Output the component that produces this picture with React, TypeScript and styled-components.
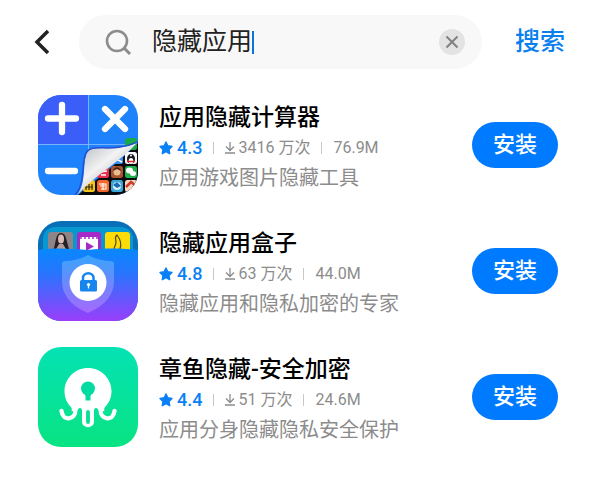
import React, { FC, useState } from 'react'
import styled, { createGlobalStyle } from 'styled-components'

const GlobalStyle = createGlobalStyle`
  * {
    box-sizing: border-box;
  }

  body {
    margin: 0;
    background: #ffffff;
    font-family: Roboto, 'Noto Sans CJK SC', sans-serif;
    color: #000000;
  }

  button,
  input {
    font-family: inherit;
    border: none;
    padding: 0;
    background: none;
  }

  button {
    cursor: pointer;
  }
`

const Page = styled.main`
  padding: 15px 0 40px;
`

const SearchBar = styled.form`
  display: flex;
  align-items: center;
  padding: 0 35px 0 34px;
`

const BackButton = styled.button`
  display: flex;
  margin-right: 29px;
`

const Field = styled.div`
  display: flex;
  align-items: center;
  flex: 1;
  min-width: 0;
  height: 54px;
  padding: 0 17px 0 26px;
  border-radius: 27px;
  background: #f8f8f8;
`

const SearchInput = styled.input`
  field-sizing: content;
  min-width: 0;
  margin-left: 20px;
  font-size: 25px;
  line-height: 36px;
  color: #222222;
  caret-color: transparent;
  outline: none;
`

const Caret = styled.span`
  width: 2px;
  height: 23px;
  background: #0a74d8;
`

const ClearButton = styled.button`
  display: flex;
  margin-left: auto;
`

const SubmitButton = styled.button`
  margin-left: 33px;
  font-size: 25px;
  font-weight: 500;
  line-height: 36px;
  color: #0a80ee;
`

const AppList = styled.ul`
  display: flex;
  flex-direction: column;
  gap: 26px;
  margin: 26px 0 0;
  padding: 0 42px 0 38px;
  list-style: none;
`

const AppRow = styled.li`
  display: flex;
  align-items: center;
`

const AppIcon = styled.svg`
  flex: none;
  width: 100px;
  height: 100px;
`

const Info = styled.div`
  flex: 1;
  min-width: 0;
  margin-left: 21px;
  padding-top: 5px;
`

const Title = styled.h2`
  margin: 0;
  font-size: 23px;
  font-weight: 500;
  line-height: 30px;
`

const Meta = styled.div`
  display: flex;
  align-items: center;
  gap: 11px;
  font-size: 16px;
  line-height: 30px;
  color: #8c8c8c;
`

const Rating = styled.span`
  display: flex;
  align-items: center;
  gap: 4px;
  font-size: 18px;
  font-weight: 500;
  color: #0a80f5;
`

const Downloads = styled.span`
  display: flex;
  align-items: center;
  gap: 3px;
`

const Divider = styled.span`
  width: 1px;
  height: 12px;
  background: #c8c8c8;
`

const Description = styled.p`
  margin: 0;
  font-size: 20px;
  line-height: 30px;
  color: #8c8c8c;
`

const InstallButton = styled.button`
  flex: none;
  width: 86px;
  height: 46px;
  border-radius: 23px;
  background: #007aff;
  font-size: 22px;
  font-weight: 500;
  line-height: 30px;
  color: #ffffff;
`

const tiles = [
  { x: 87, y: 43, color: '#18a94b' },
  { x: 73, y: 57, color: '#2f8ff0' },
  { x: 87, y: 57, color: '#f4f6fa' },
  { x: 59, y: 71, color: '#e8304c' },
  { x: 73, y: 71, color: '#a5552f' },
  { x: 87, y: 71, color: '#20b04c' },
  { x: 45, y: 85, color: '#f5c518' },
  { x: 59, y: 85, color: '#f4672a' },
  { x: 73, y: 85, color: '#3aa7d8' },
  { x: 87, y: 85, color: '#f3d9c0' },
]

const CalculatorIcon = () => (
  <AppIcon viewBox="0 0 100 100" aria-hidden="true">
    <defs>
      <clipPath id="calc-clip">
        <rect width="100" height="100" rx="23" />
      </clipPath>
      <linearGradient id="calc-curl" x1="0.1" y1="0.2" x2="0.6" y2="0.75">
        <stop offset="0" stopColor="#c6c8ce" />
        <stop offset="0.5" stopColor="#f3f3f4" />
        <stop offset="1" stopColor="#bdbdc0" />
      </linearGradient>
    </defs>
    <g clipPath="url(#calc-clip)">
      <rect width="100" height="100" fill="#1d82fb" />
      <rect width="50" height="49" fill="#3b5df8" />
      <path d="M50.500 0V100M0 49.500H100" stroke="#8fc0fb" strokeWidth="0.8" />
      <path d="M24 10V37M10 23.500H38" stroke="#fff" strokeWidth="6.300" strokeLinecap="round" />
      <path d="M67 14L87 34M87 14L67 34" stroke="#fff" strokeWidth="6.300" strokeLinecap="round" />
      <path d="M10 76H37" stroke="#fff" strokeWidth="6.300" strokeLinecap="round" />
      <path d="M40 100C58 85 80 68 100 48V100Z" fill="#0b0b0e" />
      {tiles.map(({ x, y, color }) => (
        <rect key={`${x}-${y}`} x={x} y={y} width="12" height="12" rx="2.500" fill={color} />
      ))}
      <ellipse cx="93" cy="64" rx="4" ry="5" fill="#15151a" />
      <ellipse cx="93" cy="66" rx="2.400" ry="3" fill="#fff" />
      <path d="M89 66.500H97" stroke="#dd2b2b" strokeWidth="1.500" />
      <circle cx="93" cy="60.500" r="1" fill="#fff" />
      <ellipse cx="91.500" cy="75.500" rx="3.500" ry="3" fill="#fff" />
      <ellipse cx="95" cy="78.500" rx="3" ry="2.500" fill="#fff" />
      <path d="M76 63L84 67" stroke="#fff" strokeWidth="1.500" />
      <path d="M62 77L69 76M63 80H68" stroke="#fff" strokeWidth="1.500" />
      <circle cx="79" cy="77" r="3.500" fill="#edbd92" />
      <path d="M75 76C76 71 82 71 83 76L79 74Z" fill="#4b2117" />
      <path d="M48 89V95M51 89V95M54 89V95M47 92H55" stroke="#30250e" strokeWidth="1.200" />
      <path d="M61 89H68V94H63M65 88V95M62 91H67" stroke="#fff" strokeWidth="1.100" fill="none" />
      <circle cx="79" cy="91" r="4" fill="#d9f0fa" />
      <path d="M75 90L79 87L83 91L79 93Z" fill="#1c69b4" />
      <path d="M88 92L93 87L98 91" stroke="#d43a2c" strokeWidth="2.500" fill="none" />
      <path
        d="M39 100C49 88 44 68 49 58C55 47 73 59 100 47C83 66 60 78 39 100Z"
        fill="url(#calc-curl)"
      />
      <path d="M37 100C48 88 43 67 48 58C54 47 73 59 100 47" fill="none" stroke="#234fd2" strokeWidth="1.500" />
    </g>
  </AppIcon>
)

const VaultIcon = () => (
  <AppIcon viewBox="0 0 100 100" aria-hidden="true">
    <defs>
      <clipPath id="vault-clip">
        <rect width="100" height="100" rx="23" />
      </clipPath>
      <linearGradient id="vault-front" x1="0" y1="0" x2="0" y2="1">
        <stop offset="0" stopColor="#0788fd" />
        <stop offset="0.35" stopColor="#2874fd" />
        <stop offset="1" stopColor="#9a3efb" />
      </linearGradient>
      <linearGradient id="vault-shield" x1="0" y1="0" x2="0" y2="1">
        <stop offset="0" stopColor="#37a5fc" />
        <stop offset="1" stopColor="#a569fc" />
      </linearGradient>
    </defs>
    <g clipPath="url(#vault-clip)">
      <rect width="100" height="100" fill="#0870b8" />
      <rect x="5" y="6" width="90" height="40" rx="12" fill="#0798cf" />
      <rect x="10" y="11" width="25" height="24" rx="3" fill="#8d8588" />
      <path d="M15 30C18 24 17 12 23 12C29 12 28 21 32 30Z" fill="#262027" />
      <ellipse cx="23" cy="18" rx="3" ry="4.500" fill="#d9bcb4" />
      <path d="M17 30L21 23H25L29 30Z" fill="#b79b98" />
      <rect x="39" y="11" width="24" height="24" rx="3" fill="#a52bc6" />
      <rect x="42" y="16" width="18" height="16" fill="#fff" />
      <path d="M43 15V18M47 15V18M51 15V18M55 15V18M59 15V18" stroke="#a52bc6" strokeWidth="1.500" />
      <path d="M48 21L56 25.500L48 30Z" fill="#a52bc6" />
      <rect x="67" y="11" width="25" height="24" rx="3" fill="#fbdc08" />
      <path
        d="M79 14C82 18 84 23 82 28M79 14C76 16 78 19 78 21C78 24 76 26 76 28"
        fill="none"
        stroke="#5a4a0c"
        strokeWidth="1.200"
        strokeLinecap="round"
      />
      <path d="M0 29C20 26 35 28 50 29C66 27 84 27 100 29V100H0Z" fill="url(#vault-front)" />
      <path
        d="M50 34C57 38 66 40 73 40Q76 40 76 43V60C76 76 64 86 50 92C36 86 24 76 24 60V43Q24 40 27 40C34 40 43 38 50 34Z"
        fill="url(#vault-shield)"
      />
      <circle cx="50" cy="61.500" r="18.500" fill="#fff" />
      <path d="M45 60V57C45 50.500 55.500 50.500 55.500 57V60" fill="none" stroke="#1685ee" strokeWidth="2.500" />
      <rect x="42" y="59" width="17" height="11.500" rx="1.500" fill="#1685ee" />
      <circle cx="50.500" cy="63.500" r="1.600" fill="#fff" />
      <path d="M50.500 64V67.500" stroke="#fff" strokeWidth="1.300" />
    </g>
  </AppIcon>
)

const OctopusIcon = () => (
  <AppIcon viewBox="0 0 100 100" aria-hidden="true">
    <defs>
      <linearGradient id="octopus-bg" x1="0" y1="0" x2="0" y2="1">
        <stop offset="0" stopColor="#05e2b4" />
        <stop offset="1" stopColor="#08e382" />
      </linearGradient>
    </defs>
    <rect width="100" height="100" rx="23" fill="url(#octopus-bg)" />
    <path
      d="M50 21C63 21 73.500 31.500 73.500 44C73.500 51 71 56 67 60C66 62 66 62 66.500 64H33.500C34 62 34 62 33 60C29 56 26.500 51 26.500 44C26.500 31.500 37 21 50 21Z"
      fill="#fff"
    />
    <path
      d="M23.500 64C25 75 37.500 73 37.500 63V60M76.500 64C75 75 62.500 73 62.500 63V60"
      fill="none"
      stroke="#fff"
      strokeWidth="4.400"
      strokeLinecap="round"
    />
    <path d="M39.500 68V64Q40 61 42 61Q44 61 44 64V68ZM60.500 68V64Q60 61 58 61Q56 61 56 64V68Z" fill="#06e29a" />
    <path d="M44 60H56V74.500C56 82 44 82 44 74.500Z" fill="#fff" />
    <path d="M50 65V75" stroke="#05e094" strokeWidth="3.800" strokeLinecap="round" />
    <circle cx="50" cy="41.500" r="7" fill="#04dba0" />
    <path d="M46 45H54L52.500 49V53.500H47.500V49Z" fill="#04dba0" />
  </AppIcon>
)

const BackIcon = () => (
  <svg width="16" height="28" viewBox="0 0 16 28" fill="none" aria-hidden="true">
    <path d="M14 3L3 14L14 25" stroke="#222" strokeWidth="3.500" />
  </svg>
)

const LensIcon = () => (
  <svg width="27" height="27" viewBox="0 0 27 27" fill="none" aria-hidden="true">
    <circle cx="12" cy="12" r="10" stroke="#8c8c8c" strokeWidth="2.600" />
    <path d="M19 19L25 25" stroke="#8c8c8c" strokeWidth="3" />
  </svg>
)

const ClearIcon = () => (
  <svg width="26" height="26" viewBox="0 0 26 26" fill="none" aria-hidden="true">
    <circle cx="13" cy="13" r="13" fill="#e3e3e3" />
    <path d="M7.500 7.500L18.500 18.500M18.500 7.500L7.500 18.500" stroke="#808080" strokeWidth="2" />
  </svg>
)

const StarIcon = () => (
  <svg width="14" height="14" viewBox="0 0 14 14" aria-hidden="true">
    <path
      d="M7 1L8.800 4.800L13 5.400L10 8.400L10.700 12.700L7 10.700L3.300 12.700L4 8.400L1 5.400L5.200 4.800Z"
      fill="#0a80f5"
      stroke="#0a80f5"
      strokeWidth="1.400"
      strokeLinejoin="round"
    />
  </svg>
)

const DownloadIcon = () => (
  <svg width="10" height="12" viewBox="0 0 10 12" fill="none" aria-hidden="true">
    <path d="M5 0V8.500M1 4.500L5 8.500L9 4.500M0 11H10" stroke="#8c8c8c" strokeWidth="1.300" />
  </svg>
)

interface AppItem {
  title: string
  rating: string
  downloads: string
  size: string
  description: string
  Icon: FC
}

const apps: AppItem[] = [
  {
    title: '应用隐藏计算器',
    rating: '4.3',
    downloads: '3416 万次',
    size: '76.9M',
    description: '应用游戏图片隐藏工具',
    Icon: CalculatorIcon,
  },
  {
    title: '隐藏应用盒子',
    rating: '4.8',
    downloads: '63 万次',
    size: '44.0M',
    description: '隐藏应用和隐私加密的专家',
    Icon: VaultIcon,
  },
  {
    title: '章鱼隐藏-安全加密',
    rating: '4.4',
    downloads: '51 万次',
    size: '24.6M',
    description: '应用分身隐藏隐私安全保护',
    Icon: OctopusIcon,
  },
]

const App = () => {
  const [query, setQuery] = useState('隐藏应用')

  return (
    <>
      <GlobalStyle />
      <Page>
        <SearchBar role="search" onSubmit={(e) => e.preventDefault()}>
          <BackButton type="button" aria-label="返回">
            <BackIcon />
          </BackButton>
          <Field>
            <LensIcon />
            <SearchInput
              type="text"
              name="query"
              aria-label="搜索应用"
              autoComplete="off"
              value={query}
              onChange={(e) => setQuery(e.target.value)}
            />
            <Caret />
            <ClearButton type="button" aria-label="清除" onClick={() => setQuery('')}>
              <ClearIcon />
            </ClearButton>
          </Field>
          <SubmitButton type="submit">搜索</SubmitButton>
        </SearchBar>
        <AppList>
          {apps.map(({ title, rating, downloads, size, description, Icon }) => (
            <AppRow key={title}>
              <Icon />
              <Info>
                <Title>{title}</Title>
                <Meta>
                  <Rating>
                    <StarIcon />
                    {rating}
                  </Rating>
                  <Divider />
                  <Downloads>
                    <DownloadIcon />
                    {downloads}
                  </Downloads>
                  <Divider />
                  <span>{size}</span>
                </Meta>
                <Description>{description}</Description>
              </Info>
              <InstallButton type="button">安装</InstallButton>
            </AppRow>
          ))}
        </AppList>
      </Page>
    </>
  )
}

export default App
